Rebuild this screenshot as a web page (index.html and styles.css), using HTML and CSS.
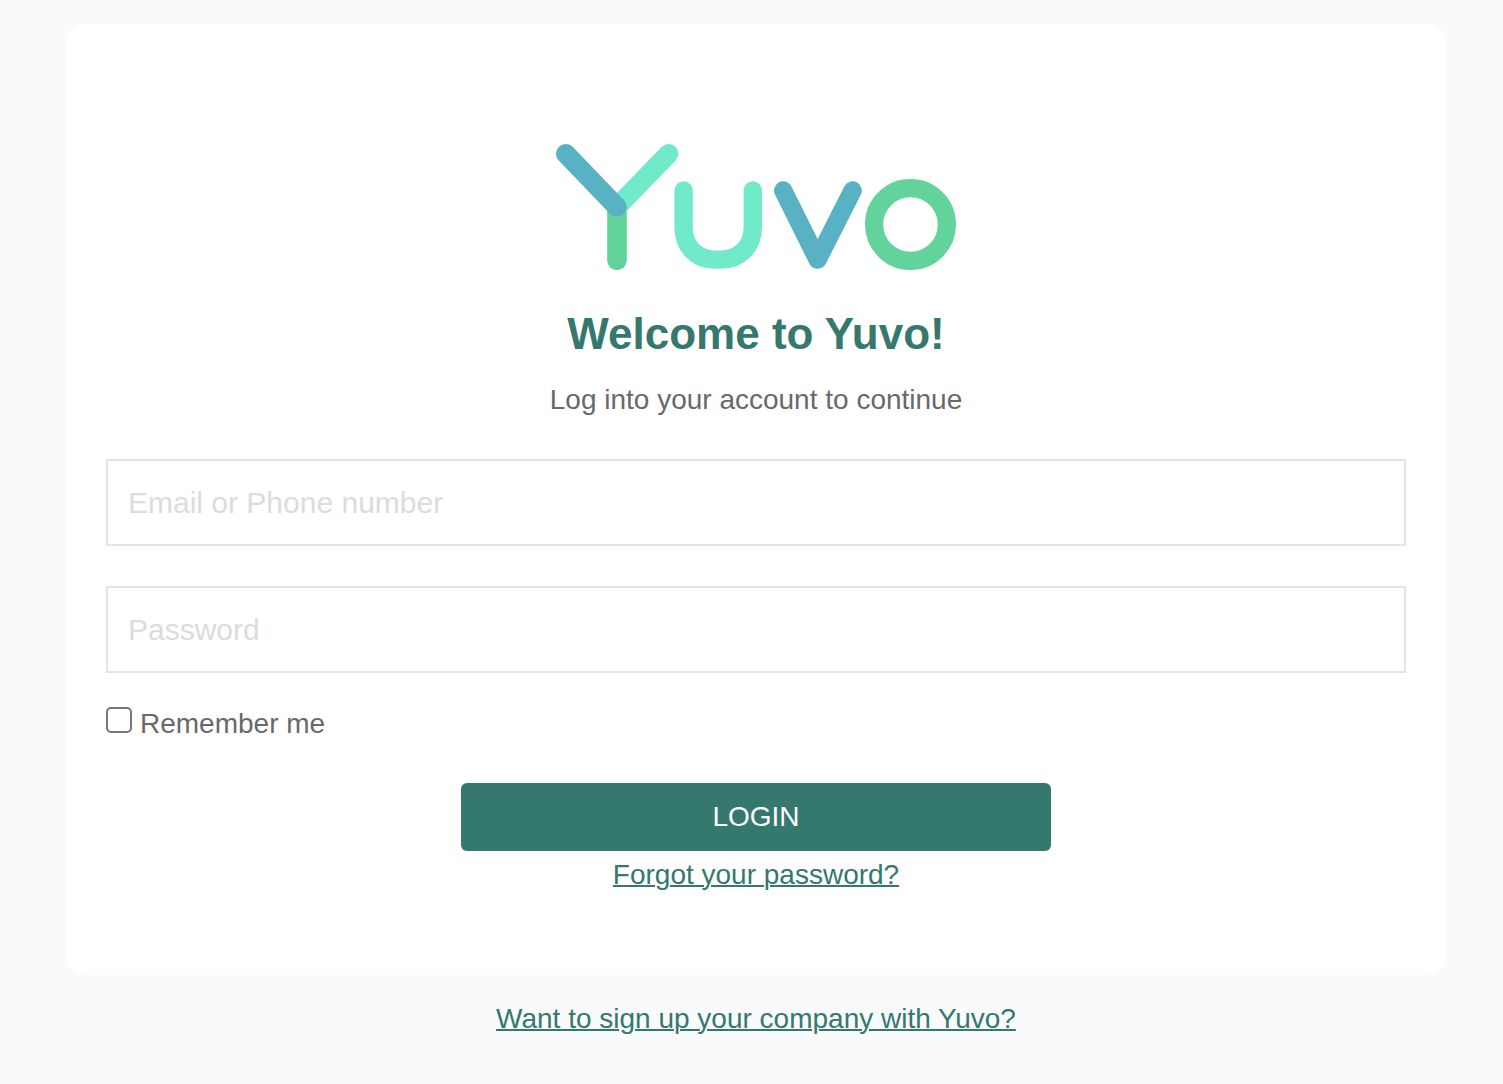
FILE: index.html
```html
<!DOCTYPE html>
<html lang="en">
<head>
<meta charset="utf-8">
<meta name="viewport" content="width=device-width, initial-scale=1">
<title>Login | Yuvo</title>
<link rel="stylesheet" href="styles.css">
</head>
<body>
<main class="page">
  <section class="card">
    <svg class="logo" viewBox="0 0 400 126" role="img" aria-label="Yuvo" fill="none" stroke-linecap="round" stroke-linejoin="round">
      <path d="M61 63V116.3" stroke="#62d39a" stroke-width="19.6"/>
      <path d="M112.6 9.8L61 63" stroke="#70eac8" stroke-width="19.6"/>
      <path d="M9.8 9.8L61 63" stroke="#58b2c3" stroke-width="19.6"/>
      <path d="M127.6 46.5V83C127.6 102 140 115.6 159 115.6H165C184 115.6 196.8 102 196.8 83V46.5" stroke="#70eac8" stroke-width="18.4"/>
      <path d="M227.2 46.5L261.6 115.6L296.6 46.5" stroke="#58b2c3" stroke-width="18.4"/>
      <circle cx="354.5" cy="80.5" r="36.4" stroke="#62d39a" stroke-width="18.2"/>
    </svg>
    <h1 class="title">Welcome to Yuvo!</h1>
    <p class="subtitle">Log into your account to continue</p>
    <form class="form">
      <input class="field" type="text" name="login" placeholder="Email or Phone number" aria-label="Email or Phone number">
      <input class="field" type="password" name="password" placeholder="Password" aria-label="Password">
      <div class="remember">
        <input class="checkbox" type="checkbox" id="remember" name="remember">
        <label for="remember">Remember me</label>
      </div>
      <button class="button" type="submit">LOGIN</button>
    </form>
    <a class="link" href="#forgot">Forgot your password?</a>
  </section>
  <a class="link" href="#signup">Want to sign up your company with Yuvo?</a>
</main>
</body>
</html>
```

FILE: styles.css
```css
* {
  box-sizing: border-box;
}

body {
  margin: 0;
  background: #f9fafc;
  color: #68696b;
  font-family: "Liberation Sans", Arial, sans-serif;
  font-size: 28px;
  line-height: 32px;
}

.page {
  display: flex;
  flex-direction: column;
  align-items: center;
  gap: 28px;
  padding: 24px 57px 24px 66px;
}

.card {
  display: flex;
  flex-direction: column;
  align-items: center;
  width: 100%;
  padding: 120px 40px 84px;
  border-radius: 20px;
  background: #fff;
}

.logo {
  display: block;
  width: 400px;
  max-width: 100%;
}

.title {
  margin: 36px 0 0;
  color: #34786e;
  font-size: 44px;
  line-height: 56px;
  text-align: center;
}

.subtitle {
  margin: 22px 0 0;
  text-align: center;
}

.form {
  display: flex;
  flex-direction: column;
  width: 100%;
  margin-top: 43px;
}

.field {
  width: 100%;
  height: 87px;
  margin: 0 0 40px;
  padding: 0 20px;
  border: 2px solid #e4e4e4;
  border-radius: 0;
  background: #fff;
  color: #68696b;
  font-family: inherit;
  font-size: 30px;
}

.field::placeholder {
  color: #dcdcdc;
  opacity: 1;
}

.remember {
  display: flex;
  align-items: flex-start;
  gap: 8px;
  margin-top: -6px;
}

.remember label {
  padding-top: 1px;
}

.checkbox {
  appearance: none;
  width: 26px;
  height: 26px;
  margin: 0;
  border: 2px solid #767676;
  border-radius: 5px;
  background: #fff;
}

.checkbox:checked {
  background: #34786e;
}

.button {
  align-self: center;
  width: 590px;
  max-width: 100%;
  height: 68px;
  margin: 43px 0 8px;
  border: 0;
  border-radius: 6px;
  background: #34786e;
  color: #fff;
  font-family: inherit;
  font-size: 28px;
  cursor: pointer;
}

.link {
  color: #34786e;
  text-align: center;
  text-decoration: underline;
  text-decoration-thickness: 2px;
}
```
